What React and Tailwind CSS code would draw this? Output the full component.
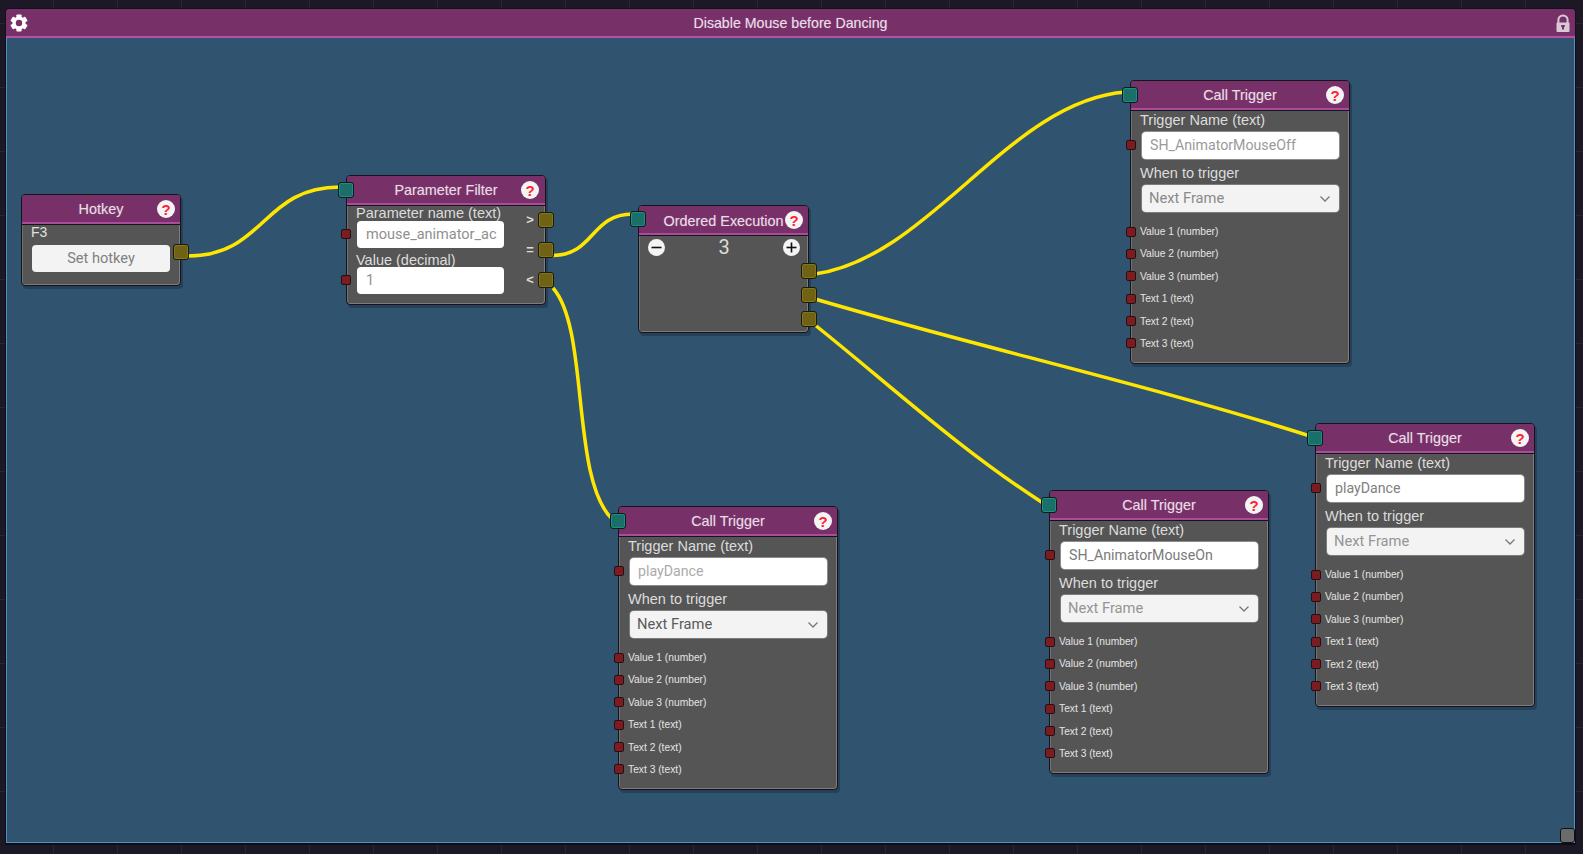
import React from "react";

const wires = [
  "M188 256 C 265 256, 262 187, 340 187",
  "M552 255.5 C 595 255.5, 590 214, 633 214",
  "M553 288 C 590 330, 570 480, 613 520",
  "M815 274 C 930 258, 1010 100, 1126 92",
  "M815 299 C 970 345, 1150 385, 1310 436",
  "M815 325 C 890 385, 960 450, 1046 505",
];

const rows = [
  "Value 1 (number)",
  "Value 2 (number)",
  "Value 3 (number)",
  "Text 1 (text)",
  "Text 2 (text)",
  "Text 3 (text)",
];

function Help({ className = "" }) {
  return (
    <div className={`absolute flex h-[18px] w-[18px] items-center justify-center rounded-full bg-[#f4f4f4] text-[15px] leading-none font-bold text-[#ff2030] ${className}`}>
      ?
    </div>
  );
}

function InPort({ className = "" }) {
  return (
    <div className={`absolute z-10 h-[16px] w-[16px] rounded-[3px] border border-[#0c1a20] bg-[#1a7068] shadow-[inset_0_0_0_1px_#1f8f84] ${className}`} />
  );
}

function OutPort() {
  return (
    <div className="h-[16px] w-[16px] rounded-[3px] border border-[#1c1a08] bg-[#6f6215] shadow-[inset_0_0_0_1px_#85761c]" />
  );
}

function DataPort({ className = "" }) {
  return (
    <div className={`absolute z-10 h-[10px] w-[10px] rounded-[2px] border border-[#241010] bg-[#7c1c22] ${className}`} />
  );
}

function Node({ className = "", title, titleClass = "pt-[3px]", helpClass = "right-[5px] top-[5px]", children }) {
  return (
    <div className={`absolute rounded-[4px] border border-[#14141a] bg-[#555555] shadow-[2px_3px_0_rgba(20,30,50,0.35),inset_-1px_-1px_0_#7d7d7d,inset_1px_0_0_#707070] ${className}`}>
      <div className={`relative flex h-[29px] items-center justify-center rounded-t-[3px] border-b-2 border-b-[#a94c9c] bg-[#783069] text-[14.4px] text-[#e6dce4] shadow-[0_1px_0_#14141a] [text-shadow:0_0_1px_rgba(255,255,255,0.35)] ${titleClass}`}>
        {title}
        <Help className={helpClass} />
      </div>
      {children}
    </div>
  );
}

function Chevron() {
  return (
    <svg width="12" height="8" viewBox="0 0 12 8" fill="none" stroke="#777777" strokeWidth="1.3">
      <path d="M1.5 1.5 L6 6 L10.5 1.5" />
    </svg>
  );
}

function CallTrigger({ className, name, nameColor, frameColor }) {
  return (
    <Node className={`h-[284px] w-[220px] ${className}`} title="Call Trigger">
      <InPort className="-left-[9px] top-[6px]" />
      <div className="flex h-[21px] items-center pt-[1px] pl-[9px] text-[14.5px] text-[#dcdcdc]">Trigger Name (text)</div>
      <div className="relative mt-[1px] pr-[10px] pl-[11px]">
        <DataPort className="-left-[5px] top-[8px]" />
        <div className={`flex h-[27px] items-center rounded-[4px] bg-white pl-[8px] font-['Roboto',sans-serif] text-[14.2px] shadow-[0_0_0_1px_#8c8c8c] ${nameColor}`}>
          {name}
        </div>
      </div>
      <div className="mt-[4px] flex h-[21px] items-center pl-[9px] text-[14.5px] text-[#dcdcdc]">When to trigger</div>
      <div className="mt-[1px] pr-[10px] pl-[11px]">
        <div className={`flex h-[27px] items-center justify-between rounded-[4px] bg-[#f3f3f3] pr-[8px] pl-[7px] font-['Roboto',sans-serif] text-[14.7px] shadow-[0_0_0_1px_#7c7c7c] ${frameColor}`}>
          Next Frame
          <Chevron />
        </div>
      </div>
      <div className="mt-[8.5px]">
        {rows.map((r) => (
          <div key={r} className="relative flex h-[22.4px] items-center pl-[9px] text-[10.25px] text-[#e4e4e4]">
            <DataPort className="-left-[5px] top-[6px]" />
            {r}
          </div>
        ))}
      </div>
    </Node>
  );
}

function Gear() {
  return (
    <svg width="18" height="18" viewBox="0 0 18 18" className="ml-[4px]" fill="#ffffff">
      {[0, 60, 120, 180, 240, 300].map((a) => (
        <rect key={a} x="6.4" y="0.4" width="5.2" height="4" rx="0.8" transform={`rotate(${a} 9 9)`} />
      ))}
      <circle cx="9" cy="9" r="4.9" fill="none" stroke="#ffffff" strokeWidth="3.4" />
    </svg>
  );
}

function Lock() {
  return (
    <svg width="14" height="18" viewBox="0 0 14 18" className="mr-[5px]" fill="none">
      <path d="M2.4 9 V6 a4.6 4.6 0 0 1 9.2 0 V9" stroke="#d9c9d6" strokeWidth="2" />
      <rect x="0.5" y="8.5" width="13" height="9.5" rx="1" fill="#d9c9d6" />
      <rect x="6" y="11" width="2" height="4.5" fill="#783069" />
      <rect x="5.2" y="11" width="3.6" height="2" fill="#783069" />
    </svg>
  );
}

function RoundButton({ sign }) {
  return (
    <div className="flex h-[17px] w-[17px] items-center justify-center rounded-full bg-[#f4f4f4]">
      <svg width="11" height="11" viewBox="0 0 11 11" stroke="#111111" strokeWidth="1.6">
        <path d="M0.5 5.5 H10.5" />
        {sign === "+" && <path d="M5.5 0.5 V10.5" />}
      </svg>
    </div>
  );
}

function FilterField({ label, value, className = "" }) {
  return (
    <>
      <div className={`flex h-[16px] items-center pl-[9px] text-[14.5px] text-[#dcdcdc] ${className}`}>{label}</div>
      <div className="relative w-[157px] pl-[10px]">
        <DataPort className="-left-[6px] top-[8px]" />
        <div className="flex h-[27px] items-center rounded-[4px] bg-white pl-[9px] font-['Roboto',sans-serif] text-[14.5px] text-[#909090]">
          {value}
        </div>
      </div>
    </>
  );
}

export default function App() {
  return (
    <div className="flex h-screen flex-col overflow-hidden bg-[#1c1826] bg-[linear-gradient(to_right,#2a2632_1px,transparent_1px),linear-gradient(to_bottom,#2a2632_1px,transparent_1px)] bg-[size:64px_64px] bg-[position:53px_23px] pt-[9px] pr-[8px] pb-[11px] pl-[6px] font-['Liberation_Sans',Arial,sans-serif]">
      {/* title bar */}
      <div className="relative flex h-[29px] shrink-0 items-center justify-between rounded-t-[3px] border-b-2 border-b-[#b054a3] bg-[#783069] shadow-[0_0_0_1px_#14101c]">
        <Gear />
        <div className="mr-[3px] pt-[3px] text-[14.2px] text-[#e9dde7] [text-shadow:0_0_1px_rgba(255,255,255,0.35)]">Disable Mouse before Dancing</div>
        <Lock />
      </div>

      {/* canvas */}
      <div className="relative flex-1 border-x border-b border-x-[#4d93c2] border-b-[#4d93c2] bg-[#30546f] shadow-[0_1px_0_1px_#0e0c14]">
        <div className="absolute -top-[38px] -left-[7px] h-[854px] w-[1583px]">
          <svg width="1583" height="854" className="absolute top-0 left-0" fill="none" stroke="#ffe600" strokeWidth="3.5">
            {wires.map((d) => (
              <path key={d} d={d} />
            ))}
          </svg>

          {/* Hotkey */}
          <Node className="top-[194px] left-[21px] h-[92px] w-[160px]" title="Hotkey">
            <div className="absolute top-[49px] -right-[9px] z-10">
              <OutPort />
            </div>
            <div className="flex h-[17px] items-center pl-[9px] text-[14px] text-[#e0e0e0]">F3</div>
            <div className="mt-[4px] ml-[10px] flex h-[27px] w-[138px] items-center justify-center rounded-[4px] bg-[#f3f3f3] font-['Roboto',sans-serif] text-[14.6px] text-[#808080]">
              Set hotkey
            </div>
          </Node>

          {/* Parameter Filter */}
          <Node className="top-[175px] left-[346px] h-[130px] w-[200px]" title="Parameter Filter" helpClass="right-[6px] top-[5px]">
            <InPort className="-left-[9px] top-[6px]" />
            <div className="absolute top-[36px] -right-[9px] z-10 flex flex-col gap-[14px]">
              {[">", "=", "<"].map((s) => (
                <div key={s} className="flex items-center gap-[2px]">
                  <span className="w-[12px] text-center text-[13px] leading-[16px] font-bold text-[#dcdcdc]">{s}</span>
                  <OutPort />
                </div>
              ))}
            </div>
            <FilterField label="Parameter name (text)" value="mouse_animator_ac" className="pt-[2px]" />
            <FilterField label="Value (decimal)" value="1" className="mt-[3px] pt-[3px]" />
          </Node>

          {/* Ordered Execution */}
          <Node className="top-[205px] left-[638px] h-[128px] w-[171px]" title="Ordered Execution" titleClass="pt-[5px]">
            <InPort className="-left-[9px] top-[5px]" />
            <div className="absolute top-[57px] -right-[9px] z-10 flex flex-col gap-[8px]">
              <OutPort />
              <OutPort />
              <OutPort />
            </div>
            <div className="flex items-center justify-between pt-[4px] pr-[8px] pl-[9px]">
              <RoundButton sign="-" />
              <div className="font-['Roboto',sans-serif] text-[20px] leading-[17px] text-[#dcdcdc]">3</div>
              <RoundButton sign="+" />
            </div>
          </Node>

          <CallTrigger className="top-[80px] left-[1130px]" name="SH_AnimatorMouseOff" nameColor="text-[#9a9a9a]" frameColor="text-[#8a8a8a]" />
          <CallTrigger className="top-[506px] left-[618px]" name="playDance" nameColor="text-[#ababab]" frameColor="text-[#5a5a5a]" />
          <CallTrigger className="top-[490px] left-[1049px]" name="SH_AnimatorMouseOn" nameColor="text-[#7a7a7a]" frameColor="text-[#959595]" />
          <CallTrigger className="top-[423px] left-[1315px]" name="playDance" nameColor="text-[#808080]" frameColor="text-[#959595]" />
        </div>
        {/* resize handle */}
        <div className="absolute -right-[1px] -bottom-[1px] h-[15px] w-[15px] rounded-[3px] border border-[#111111] bg-[#6b6b6b]" />
      </div>
    </div>
  );
}
